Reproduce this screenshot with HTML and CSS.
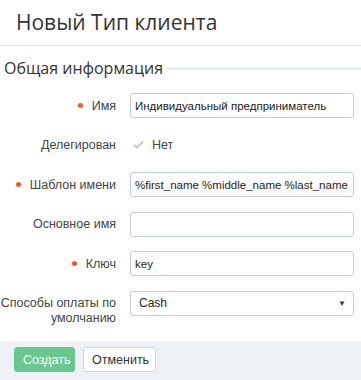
FILE: index.html
```html
<!DOCTYPE html>
<html lang="ru">
  <head>
    <meta charset="UTF-8" />
    <title>Новый Тип клиента</title>
    <link rel="stylesheet" href="styles.css">
  </head>
  <body>
    <div class="page">
      <h1 class="title">Новый Тип клиента</h1>

      <div class="section">
        <div class="legend">Общая информация</div>

        <div class="row">
          <label class="label required">Имя</label>
          <input class="field" type="text" value="Индивидуальный предприниматель" />
        </div>

        <div class="row">
          <label class="label">Делегирован</label>
          <div class="check">
            <svg width="11" height="9" viewBox="0 0 11 9">
              <path d="M1 4.8 L4 7.6 L10 1.4" fill="none" stroke="#c6cbd1" stroke-width="2.2" />
            </svg>
            <span>Нет</span>
          </div>
        </div>

        <div class="row">
          <label class="label required">Шаблон имени</label>
          <input class="field" type="text" value="%first_name %middle_name %last_name" />
        </div>

        <div class="row">
          <label class="label">Основное имя</label>
          <input class="field" type="text" value="" />
        </div>

        <div class="row">
          <label class="label required">Ключ</label>
          <input class="field" type="text" value="key" />
        </div>

        <div class="row row-top">
          <label class="label two-lines">Способы оплаты по умолчанию</label>
          <div class="select">
            <span>Cash</span>
            <span class="arrow">▼</span>
          </div>
        </div>
      </div>

      <div class="footer">
        <button class="create-button">Создать</button>
        <button class="cancel-button">Отменить</button>
      </div>
    </div>
  </body>
</html>
```

FILE: styles.css
```css
body {
  font-family: "Liberation Sans", Arial, sans-serif;
  background: white;
  color: #333;
  margin: 0;
  padding: 0;
}

.page {
  width: 361px;
  height: 380px;
  display: flex;
  flex-direction: column;
  overflow: hidden;
}

.title {
  margin: 0;
  height: 45px;
  padding-left: 16px;
  font-family: "Open Sans", sans-serif;
  font-size: 21px;
  font-weight: 400;
  line-height: 45px;
  color: #333;
  border-bottom: 1px solid #dce0e5;
}

.section {
  flex: 1;
}

.legend {
  display: flex;
  align-items: center;
  gap: 4px;
  height: 24px;
  margin-top: 10px;
  margin-bottom: 13px;
  padding-left: 4px;
  font-family: "Open Sans", sans-serif;
  font-size: 16px;
  color: #333;
}

.legend::after {
  content: "";
  flex: 1;
  height: 1px;
  background: #d6dce3;
  margin-top: 1px;
}

.row {
  display: grid;
  grid-template-columns: 116px 224px;
  column-gap: 14px;
  align-items: center;
  height: 24px;
  margin-bottom: 15.6px;
}

.row-top {
  align-items: start;
}

.label {
  text-align: right;
  font-size: 12.5px;
  color: #444;
}

.required::before {
  content: "";
  display: inline-block;
  width: 5px;
  height: 5px;
  border-radius: 50%;
  background: #f0592e;
  margin-right: 9px;
  vertical-align: 2px;
}

.two-lines {
  line-height: 15px;
  margin-top: 5px;
}

.field {
  box-sizing: border-box;
  width: 224px;
  height: 25px;
  padding: 0 4px;
  border: 1px solid #c7ccd2;
  border-radius: 3px;
  font-family: "Liberation Sans", Arial, sans-serif;
  font-size: 11.5px;
  color: #222;
  outline: none;
}

.check {
  display: flex;
  align-items: center;
  gap: 8px;
  padding-left: 3px;
  font-size: 12.5px;
  color: #444;
}

.select {
  box-sizing: border-box;
  height: 25px;
  display: flex;
  align-items: center;
  justify-content: space-between;
  padding: 0 7px 0 8px;
  border: 1px solid #c7ccd2;
  border-radius: 3px;
  font-size: 12px;
  color: #222;
}

.select .arrow {
  font-size: 8px;
  color: #333;
}

.footer {
  display: flex;
  gap: 8px;
  height: 39px;
  padding: 6px 14px 0;
  box-sizing: border-box;
  background: #eef1f5;
}

button {
  height: 25px;
  padding: 0 8px;
  border-radius: 3px;
  font-family: "Liberation Sans", Arial, sans-serif;
  font-size: 12.5px;
  cursor: pointer;
}

.create-button {
  width: 61px;
  background-color: #68c890;
  border: 1px solid #68c890;
  color: white;
}

.cancel-button {
  width: 73px;
  background-color: white;
  border: 1px solid #d3d8de;
  color: #333;
}
```
